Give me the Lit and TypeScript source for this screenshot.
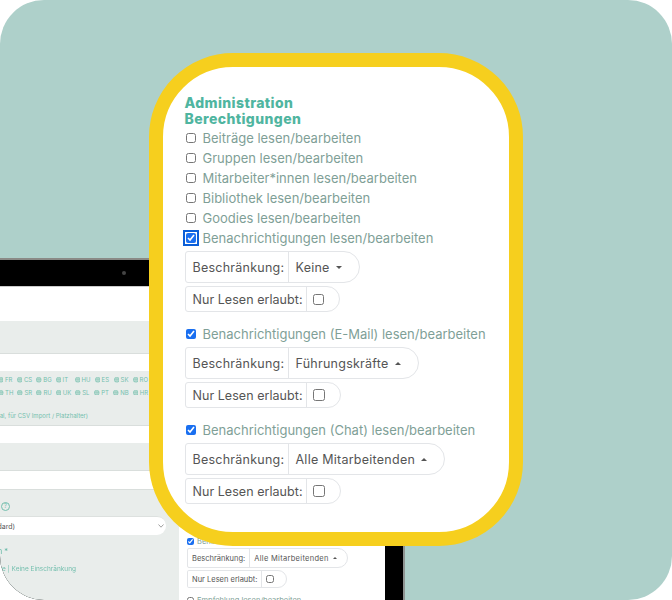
import { LitElement, html, css } from "lit";
import { customElement } from "lit/decorators.js";

const LANGS1 = ["FR", "CS", "BG", "IT", "HU", "ES", "SK", "RO"];
const LANGS2 = ["TH", "SR", "RU", "UK", "SL", "PT", "NB", "HR"];

const globe = html`<svg class="globe" viewBox="0 0 10 10" aria-hidden="true">
  <circle cx="5" cy="5" r="4.8" fill="#7fc4b3"></circle>
  <path d="M0.5 3.5H9.5M0.5 6.5H9.5M5 .5V9.5" stroke="#e9edeb" stroke-width=".6" fill="none"></path>
  <ellipse cx="5" cy="5" rx="2.2" ry="4.6" stroke="#e9edeb" stroke-width=".6" fill="none"></ellipse>
</svg>`;

@customElement("app-root")
export class AppRoot extends LitElement {
  static styles = css`
    :host { display: block; width: 672px; height: 600px; overflow: hidden; background: #fff; font-family: "Inter", "Liberation Sans", sans-serif; }
    .stage { position: relative; width: 672px; height: 600px; background: #aed0ca; border-radius: 44px; overflow: hidden; }

    /* tablet mockup: free-canvas illustration */
    .tablet { position: absolute; left: -20px; top: 258px; width: 425px; height: 360px; box-sizing: border-box; background: #000; border-top: 2px solid #8a8a86; border-right: 2px solid #8f9492; }
    .cam { position: absolute; left: 142px; top: 11px; width: 4px; height: 4px; border-radius: 50%; background: #444; }
    .screen { position: absolute; left: 0; right: 18px; top: 26px; bottom: 0; background: #fff; display: grid; grid-template-columns: 199px 206px; font-size: 6.5px; color: #74bfae; border-top: 1px solid #ccc; box-sizing: border-box; filter: blur(.25px); }
    .left { display: flex; flex-direction: column; }
    .white { background: #fff; flex: none; }
    .band { background: #e9edeb; flex: none; box-sizing: border-box; border-bottom: 1px solid #d9dedc; }
    .band.last { flex: 1; border: 0; border-top: 1px solid #d9dedc; position: relative; }
    .band.langs { display: flex; flex-direction: column; padding: 5px 31px 0 0; align-items: flex-end; overflow: hidden; }
    .lrow { display: flex; justify-content: flex-end; white-space: nowrap; line-height: 8px; gap: 4px; font-size: 6px; }
    .lrow + .lrow { margin-top: 4.5px; }
    .lang { display: inline-flex; align-items: center; gap: 1.5px; min-width: 15px; }
    .globe { width: 5.5px; height: 5.5px; flex: none; }
    .hint { margin-top: 15px; margin-right: 60px; font-size: 6px; white-space: nowrap; line-height: 8px; }
    .qrow { display: flex; justify-content: flex-end; padding: 12px 169px 0 0; }
    .q { width: 7px; height: 7px; border: 1px solid #74bfae; border-radius: 50%; font-size: 5.5px; line-height: 7px; text-align: center; }
    .select { display: flex; justify-content: space-between; align-items: center; box-sizing: border-box; height: 19px; margin: 5px 13px 0 0; padding: 0 2px 0 0; background: #fff; border-radius: 9px; color: #555; font-size: 7px; border-top: 1px solid #dde1df; }
    .chev { width: 6px; height: 4px; }
    .lab { margin-top: 12px; width: 28px; display: flex; justify-content: flex-end; font-size: 7.5px; color: #5fb6a3; line-height: 9px; white-space: nowrap; }
    .lim { margin-top: 9px; width: 96px; display: flex; justify-content: flex-end; white-space: nowrap; font-size: 6.5px; line-height: 8px; }

    .panel { background: #fff; padding: 250px 0 0 8px; box-sizing: border-box; overflow: hidden; display: flex; flex-direction: column; align-items: flex-start; gap: 2px; color: #555; font-size: 7.5px; }
    .mini { display: flex; border: 1px solid #e3e5e8; border-radius: 2px 10px 10px 2px; height: 20px; box-sizing: border-box; align-items: center; }
    .mini.b { height: 18px; }
    .mini .l { padding: 0 4px; height: 100%; display: flex; align-items: center; border-right: 1px solid #e3e5e8; white-space: nowrap; }
    .mini .v { padding: 0 10px 0 4px; display: flex; align-items: center; gap: 4px; white-space: nowrap; letter-spacing: .3px; }
    .mini .v.c { padding: 0 12px 0 4px; }
    .mini.b .l { padding-right: 3px; }
    .mini input { width: 8px; height: 8px; margin: 0; }
    .caret.small { border-width: 2px; border-top: 0; border-bottom-color: #555; border-bottom-width: 2px; }
    .erow { display: flex; align-items: center; gap: 3px; color: #7f9f97; white-space: nowrap; height: 9px; }
    .erow.last { margin-top: 6px; }
    .erow input { width: 7px; height: 7px; margin: 0; accent-color: #1a6ff0; }

    /* highlighted card lying over the mockup */
    .card { position: absolute; left: 149px; top: 53px; width: 374px; height: 493px; box-sizing: border-box; border: 14.5px solid #f6cf1e; border-radius: 84px; background: #fff; padding: 28px 0 0 21.5px; }
    h2 { margin: 0 0 1px; font-size: 14px; line-height: 16px; font-weight: 800; color: #4fb5a0; letter-spacing: .4px; }
    .row { display: flex; align-items: center; gap: 7px; height: 20px; font-size: 13px; color: #7f9f97; white-space: nowrap; padding-left: 1px; }
    .row input { width: 10px; height: 10px; margin: 0; accent-color: #1a6ff0; }
    .row.focus input { outline: 2px solid #0b5ed7; outline-offset: 1px; border-radius: 2px; }
    .group { display: flex; flex-direction: column; align-items: flex-start; gap: 3px; margin: 3px 0 0; }
    .block + .block { margin-top: 12px; }
    .ig { display: inline-flex; border: 1px solid #e3e5e8; border-radius: 3px 16px 16px 3px; box-sizing: border-box; height: 32px; align-items: stretch; font-size: 12.5px; letter-spacing: .25px; color: #555; white-space: nowrap; }
    .ig.ro { height: 26px; border-radius: 3px 13px 13px 3px; letter-spacing: .05px; }
    .ig .l { display: flex; align-items: center; padding: 0 6px 0 7px; border-right: 1px solid #e3e5e8; }
    .ig .l.sel { width: 89px; }
    .ig .l.nur { width: 107px; }
    .ig .v { display: flex; align-items: center; padding: 0 17px 0 7px; gap: 6px; }
    .ig .v.c { padding: 0 15px 0 6px; }
    .ig input { margin: 0; width: 12px; height: 12px; }
    .ig input.sm { width: 11px; height: 11px; }
    .caret { width: 0; height: 0; border: 3px solid transparent; }
    .caret.down { border-top: 3px solid #555; border-bottom: 0; }
    .caret.up { border-bottom: 3px solid #555; border-top: 0; }
  `;

  private sel(value: string, dir: string) {
    return html`<div class="ig"><span class="l sel">Beschränkung:</span><span class="v">${value}<i class="caret ${dir}"></i></span></div>`;
  }
  private nur(small = false) {
    return html`<div class="ig ro"><span class="l nur">Nur Lesen erlaubt:</span><span class="v c"><input type="checkbox" class=${small ? "sm" : ""} /></span></div>`;
  }
  private plain(t: string) {
    return html`<label class="row"><input type="checkbox" />${t}</label>`;
  }
  private block(t: string, value: string, dir: string, focus = false, small = false) {
    return html`<div class="block">
      <label class="row ${focus ? "focus" : ""}"><input type="checkbox" checked />${t}</label>
      <div class="group">${this.sel(value, dir)}${this.nur(small)}</div>
    </div>`;
  }

  render() {
    return html`<div class="stage">
      <div class="tablet">
        <span class="cam"></span>
        <div class="screen">
          <div class="left">
            <div class="white" style="height:34px"></div>
            <div class="band" style="height:33px"></div>
            <div class="white" style="height:17px"></div>
            <div class="band langs" style="height:55px">
              <div class="lrow">${LANGS1.map((l) => html`<span class="lang">${globe}${l}</span>`)}</div>
              <div class="lrow">${LANGS2.map((l) => html`<span class="lang">${globe}${l}</span>`)}</div>
              <div class="hint">(optional, für CSV Import / Platzhalter)</div>
            </div>
            <div class="white" style="height:17px"></div>
            <div class="band" style="height:28px"></div>
            <div class="white" style="height:18px"></div>
            <div class="band last">
              <div class="qrow"><span class="q">?</span></div>
              <div class="select"><span>(Standard)</span>
                <svg class="chev" viewBox="0 0 6 4"><path d="M.5 .5L3 3.2L5.500 .5" stroke="#888" stroke-width=".8" fill="none"></path></svg>
              </div>
              <div class="lab">Zielgruppen *</div>
              <div class="lim">Alle Bereiche | Keine Einschränkung</div>
            </div>
          </div>
          <div class="panel">
            <label class="erow"><input type="checkbox" checked />Benachrichtigungen (Chat) lesen/bearbeiten</label>
            <div class="mini"><span class="l">Beschränkung:</span><span class="v">Alle Mitarbeitenden<i class="caret small"></i></span></div>
            <div class="mini b"><span class="l">Nur Lesen erlaubt:</span><span class="v c"><input type="checkbox" /></span></div>
            <label class="erow last"><input type="checkbox" />Empfehlung lesen/bearbeiten</label>
          </div>
        </div>
      </div>

      <section class="card">
        <h2>Administration<br />Berechtigungen</h2>
        ${this.plain("Beiträge lesen/bearbeiten")}
        ${this.plain("Gruppen lesen/bearbeiten")}
        ${this.plain("Mitarbeiter*innen lesen/bearbeiten")}
        ${this.plain("Bibliothek lesen/bearbeiten")}
        ${this.plain("Goodies lesen/bearbeiten")}
        ${this.block("Benachrichtigungen lesen/bearbeiten", "Keine", "down", true, true)}
        ${this.block("Benachrichtigungen (E-Mail) lesen/bearbeiten", "Führungskräfte", "up")}
        ${this.block("Benachrichtigungen (Chat) lesen/bearbeiten", "Alle Mitarbeitenden", "up")}
      </section>
    </div>`;
  }
}
